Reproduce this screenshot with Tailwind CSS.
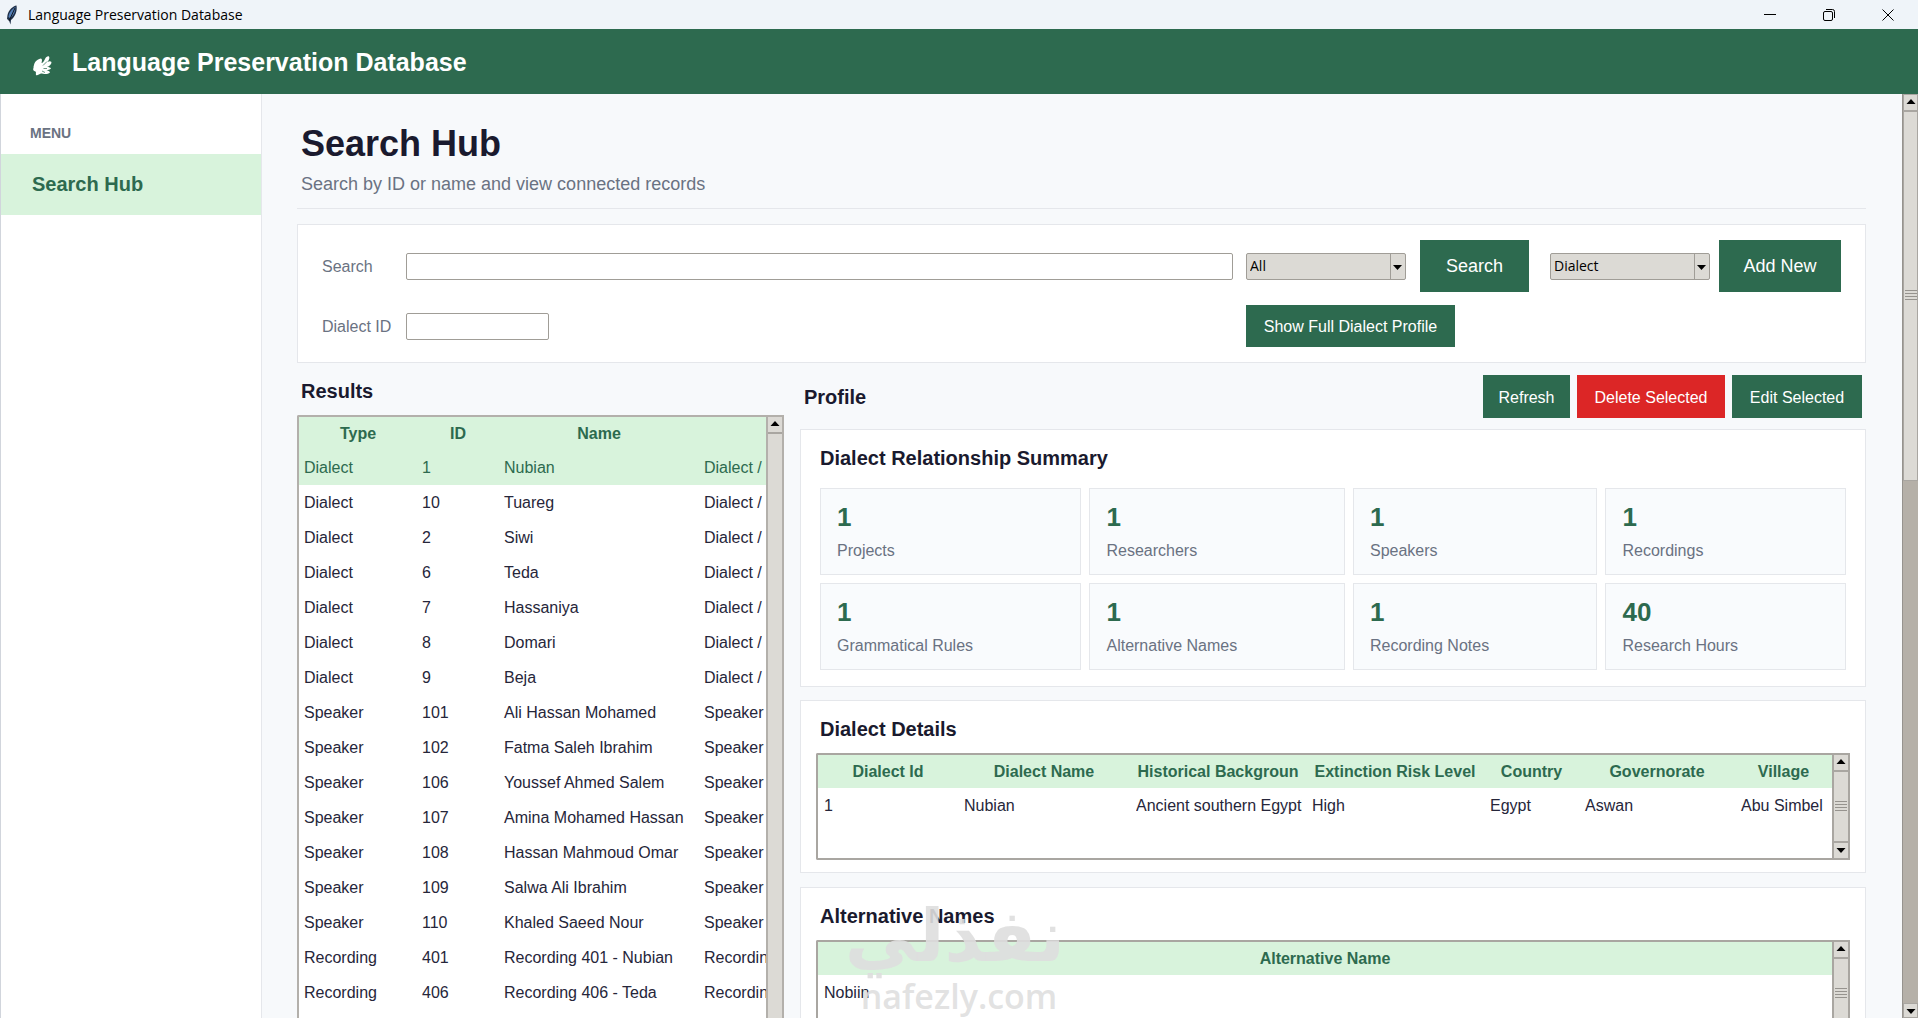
<!DOCTYPE html>
<html lang="en">
  <head>
    <meta charset="UTF-8">
    <title>Language Preservation Database</title>
    <script src="https://cdn.jsdelivr.net/npm/@tailwindcss/browser@4"></script>
  </head>
  <body class="h-screen flex flex-col overflow-hidden bg-[#f7f9fb] text-base leading-5 text-[#1a1a2e] font-['Liberation_Sans',Arial,sans-serif]">

    <!-- window title bar -->
    <div class="h-[29px] shrink-0 flex items-center bg-[#eff4f9] pl-1 pr-[6px] text-black">
      <svg class="w-4 h-5" viewBox="0 0 16 20">
        <path d="M12.5 0.5C9 1 4.500 5 3.500 10L3 14L5 15.500L6.500 19.500L7 15C11 12 13.500 6 12.500 0.500Z" fill="#1e2f48"/>
        <path d="M11.500 2C8 4 5 7 4.500 12L6 13C9 11 11.500 7 11.500 2Z" fill="#5580b8"/>
        <path d="M11 3L5 16" stroke="#10161f" fill="none"/>
      </svg>
      <span class="ml-2 text-sm font-['Open_Sans',sans-serif]">Language Preservation Database</span>
      <div class="ml-auto flex">
        <button class="w-12 h-[29px] grid place-items-center" aria-label="Minimize">
          <svg class="w-3 h-3" viewBox="0 0 12 12" stroke="#000" fill="none"><path d="M0 5.500H12"/></svg>
        </button>
        <button class="w-[70px] h-[29px] grid place-items-center" aria-label="Restore">
          <svg class="w-3 h-3" viewBox="0 0 12 12" stroke="#000" fill="none"><rect x=".5" y="2.500" width="9" height="9" rx="1.500"/><path d="M3 .5H9.500A2 2 0 0 1 11.500 2.500V9"/></svg>
        </button>
        <button class="w-12 h-[29px] grid place-items-center" aria-label="Close">
          <svg class="w-3 h-3" viewBox="0 0 12 12" stroke="#000" fill="none"><path d="M.5 .5L11.500 11.500M11.500 .5L.5 11.500"/></svg>
        </button>
      </div>
    </div>

    <header class="h-[65px] shrink-0 flex items-center bg-[#2d6a4f] pl-8 text-white">
      <svg class="w-5 h-5 mt-2" viewBox="0 0 20 20" fill="#fff">
        <path d="M2 9C3 5 6 3 9 2.500C10.500 3 10 5 9.500 7C11 7 12 5 13 3C14 1 15.500 0 17 .5C18 2 17 4 15.500 6C17 5 18.500 5 19.500 6C19.500 8.500 17.500 10 15 11C17 11 18.500 11.500 19 12.500C18 14 16 14 14.500 14C16 15 17.500 15 18 16.500C15 19 11 17.500 9 17.500C7 18 5.500 20 4 19C3.500 17.500 4.500 16.500 3.500 15.500C1.500 15 .5 13.500 1.500 12C1.500 11 1.500 10 2 9Z"/>
        <path d="M11 9.500L15 5.500M11.500 12.500H15M10 15L13 16.500" stroke="#2d6a4f" stroke-width=".7" fill="none"/>
      </svg>
      <div class="ml-5 text-[25px] leading-8 font-bold">Language Preservation Database</div>
    </header>

    <div class="flex-1 min-h-0 flex">
      <nav class="w-[262px] shrink-0 bg-white border-l border-r border-l-gray-300 border-r-gray-200">
        <div class="h-[60px] pt-[29px] pl-[29px] text-sm leading-5 font-bold text-gray-500">MENU</div>
        <a href="#" class="h-[61px] flex items-center pb-[2px] pl-[31px] bg-[#d8f3dc] text-xl leading-6 font-bold text-[#2d6a4f]">Search Hub</a>
      </nav>

      <main class="flex-1 min-w-0 flex flex-col pl-[35px] pr-9">
        <div class="h-[115px] shrink-0 border-b border-gray-200 pl-1 pt-[30px]">
          <h1 class="text-4xl leading-10 font-bold">Search Hub</h1>
          <p class="mt-2 text-lg leading-6 text-gray-500">Search by ID or name and view connected records</p>
        </div>

        <!-- search card -->
        <form class="mt-[15px] h-[139px] shrink-0 bg-white border border-gray-200 pl-6 pr-6 pt-[15px]">
          <div class="flex items-center h-[52px]">
            <label for="search" class="w-[84px] pt-[2px] text-gray-500">Search</label>
            <input id="search" type="text" class="flex-1 min-w-0 h-[27px] border border-[#a09d97] rounded-xs bg-white">
            <div class="relative ml-[13px]">
              <select aria-label="Search type" class="appearance-none block w-40 h-[27px] pl-[3px] border border-[#a09d97] rounded-xs bg-[#dcdad5] text-sm leading-5 text-black font-['Open_Sans',sans-serif]"><option>All</option></select>
              <svg class="absolute right-0 top-0 w-4 h-[27px] pointer-events-none" viewBox="0 0 16 27"><path d="M.5 1V26" stroke="#a09d97"/><path d="M3 12H12L7.500 17Z"/></svg>
            </div>
            <button type="button" class="ml-[14px] w-[109px] h-[52px] bg-[#2d6a4f] text-lg text-white">Search</button>
            <div class="relative ml-[21px]">
              <select aria-label="Record type" class="appearance-none block w-40 h-[27px] pl-[3px] border border-[#a09d97] rounded-xs bg-[#dcdad5] text-sm leading-5 text-black font-['Open_Sans',sans-serif]"><option>Dialect</option></select>
              <svg class="absolute right-0 top-0 w-4 h-[27px] pointer-events-none" viewBox="0 0 16 27"><path d="M.5 1V26" stroke="#a09d97"/><path d="M3 12H12L7.500 17Z"/></svg>
            </div>
            <button type="button" class="ml-[9px] w-[122px] h-[52px] bg-[#2d6a4f] text-lg text-white">Add New</button>
          </div>
          <div class="mt-[13px] flex items-center h-[42px]">
            <label for="dialectId" class="w-[84px] pt-[2px] text-gray-500">Dialect ID</label>
            <input id="dialectId" type="text" class="w-[143px] h-[27px] border border-[#a09d97] rounded-xs bg-white">
            <div class="ml-auto w-[595px]">
              <button type="button" class="w-[209px] h-[42px] pt-[2px] bg-[#2d6a4f] text-white">Show Full Dialect Profile</button>
            </div>
          </div>
        </form>

        <div class="flex-1 min-h-0 grid grid-cols-[487px_minmax(0,1fr)] gap-x-4">
          <section class="min-h-0 flex flex-col">
            <h2 class="pt-4 pl-1 h-[52px] text-xl leading-6 font-bold">Results</h2>
            <div class="flex-1 min-h-0 flex border-2 border-b-0 border-r-0 border-[#b3b0ab] rounded-tl-xs bg-white">
              <div class="flex-1 min-w-0 overflow-hidden">
                <table class="w-full table-fixed whitespace-nowrap">
                  <colgroup><col class="w-[118px]"><col class="w-[82px]"><col class="w-[200px]"><col></colgroup>
                  <thead class="bg-[#d8f3dc] text-[#2d6a4f]">
                    <tr class="h-[33px]"><th>Type</th><th>ID</th><th>Name</th><th></th></tr>
                  </thead>
                  <tbody id="results" class="text-[#26263a]"></tbody>
                </table>
              </div>
              <div class="w-[18px] flex flex-col border-x-2 border-[#b3b0ab] bg-[#dcdad5]">
                <svg class="w-[14px] h-[15px]" viewBox="0 0 14 15"><path d="M2.500 9H11.500L7 4Z"/></svg>
                <div class="flex-1 border-t-2 border-[#a9a6a1]"></div>
              </div>
            </div>
          </section>

          <section class="min-w-0 min-h-0">
            <div class="flex items-center gap-[7px] pt-3 pb-[11px] pl-1 pr-1 h-[66px]">
              <h2 class="mr-auto text-xl leading-6 font-bold">Profile</h2>
              <button type="button" class="w-[87px] h-[43px] pt-[2px] bg-[#2d6a4f] text-white">Refresh</button>
              <button type="button" class="w-[148px] h-[43px] pt-[2px] bg-[#dc2626] text-white">Delete Selected</button>
              <button type="button" class="w-[130px] h-[43px] pt-[2px] bg-[#2d6a4f] text-white">Edit Selected</button>
            </div>

            <div class="bg-white border border-gray-200 px-[19px] pt-4 h-[258px]">
              <h3 class="text-xl leading-6 font-bold">Dialect Relationship Summary</h3>
              <div id="stats" class="mt-[18px] grid grid-cols-[262fr_256fr_245fr_241fr] gap-2"></div>
            </div>

            <div class="mt-[13px] bg-white border border-gray-200 pl-[15px] pr-[15px] pt-4 h-[173px]">
              <h3 class="pl-1 text-xl leading-6 font-bold">Dialect Details</h3>
              <div class="mt-3 h-[107px] flex border-2 border-r-0 border-[#a9a6a1] rounded-l-xs">
                <div class="flex-1 min-w-0 overflow-hidden">
                  <table class="w-full table-fixed whitespace-nowrap">
                    <colgroup><col class="w-[140px]"><col class="w-[172px]"><col class="w-[176px]"><col class="w-[178px]"><col class="w-[95px]"><col class="w-[156px]"><col></colgroup>
                    <thead class="bg-[#d8f3dc] text-[#2d6a4f]">
                      <tr class="h-[33px]"><th>Dialect Id</th><th>Dialect Name</th><th>Historical Backgroun</th><th>Extinction Risk Level</th><th>Country</th><th>Governorate</th><th>Village</th></tr>
                    </thead>
                    <tbody class="text-[#26263a]">
                      <tr class="h-[35px]"><td class="pl-[6px]">1</td><td class="pl-[6px]">Nubian</td><td class="pl-[6px] pr-1"><div class="overflow-hidden">Ancient southern Egyptian</div></td><td class="pl-[6px]">High</td><td class="pl-[6px]">Egypt</td><td class="pl-[6px]">Aswan</td><td class="pl-[6px]">Abu Simbel</td></tr>
                    </tbody>
                  </table>
                </div>
                <div class="w-[18px] flex flex-col items-center border-x-2 border-[#a9a6a1] bg-[#dcdad5]">
                  <svg class="w-[14px] h-[15px]" viewBox="0 0 14 15"><path d="M2.500 9H11.500L7 4Z"/></svg>
                  <div class="flex-1 w-full border-y-2 border-[#a9a6a1] grid place-items-center">
                    <svg class="w-3 h-3" viewBox="0 0 12 12" stroke="#96938e"><path d="M0 .5H12M0 3.500H12M0 6.500H12M0 9.500H12"/></svg>
                  </div>
                  <svg class="w-[14px] h-[15px]" viewBox="0 0 14 15"><path d="M2.500 5H11.500L7 10Z"/></svg>
                </div>
              </div>
            </div>

            <div class="relative mt-[14px] bg-white border border-gray-200 pl-[15px] pr-[15px] pt-4 h-[173px]">
              <h3 class="pl-1 text-xl leading-6 font-bold">Alternative Names</h3>
              <div class="mt-3 h-[107px] flex border-2 border-r-0 border-[#a9a6a1] rounded-l-xs">
                <div class="flex-1 min-w-0 overflow-hidden">
                  <table class="w-full table-fixed whitespace-nowrap">
                    <thead class="bg-[#d8f3dc] text-[#2d6a4f]"><tr class="h-[33px]"><th>Alternative Name</th></tr></thead>
                    <tbody class="text-[#26263a]"><tr class="h-[35px]"><td class="pl-[6px]">Nobiin</td></tr></tbody>
                  </table>
                </div>
                <div class="w-[18px] flex flex-col items-center border-x-2 border-[#a9a6a1] bg-[#dcdad5]">
                  <svg class="w-[14px] h-[15px]" viewBox="0 0 14 15"><path d="M2.500 9H11.500L7 4Z"/></svg>
                  <div class="flex-1 w-full border-y-2 border-[#a9a6a1] grid place-items-center">
                    <svg class="w-3 h-3" viewBox="0 0 12 12" stroke="#96938e"><path d="M0 .5H12M0 3.500H12M0 6.500H12M0 9.500H12"/></svg>
                  </div>
                  <svg class="w-[14px] h-[15px]" viewBox="0 0 14 15"><path d="M2.500 5H11.500L7 10Z"/></svg>
                </div>
              </div>

              <!-- watermark -->
              <div class="absolute left-[52px] top-[10px] w-[212px] text-center text-[#dedede]/90 pointer-events-none">
                <div lang="ar" dir="rtl" class="h-[78px] text-[72px] leading-[76px] font-bold font-['DejaVu_Sans',sans-serif]">نفذلي</div>
                <div class="text-[34px] leading-10 font-semibold font-['Open_Sans',sans-serif]">nafezly.com</div>
              </div>
            </div>
          </section>
        </div>
      </main>

      <!-- page scrollbar -->
      <div class="w-4 shrink-0 flex flex-col items-center bg-[#b5b0a8] border-l border-[#96938e]">
        <div class="w-full h-[17px] bg-[#dcdad5] border border-[#a9a6a1]"><svg class="w-[14px] h-[15px]" viewBox="0 0 14 15"><path d="M2.500 9H11.500L7 4Z"/></svg></div>
        <div class="w-full h-[40%] bg-[#dcdad5] border border-[#a9a6a1] grid place-items-center">
          <svg class="w-3 h-3" viewBox="0 0 12 12" stroke="#96938e"><path d="M0 .5H12M0 3.500H12M0 6.500H12M0 9.500H12"/></svg>
        </div>
        <div class="mt-auto w-full h-[15px] bg-[#dcdad5] border border-[#a9a6a1]"><svg class="w-[14px] h-[15px]" viewBox="0 0 14 15"><path d="M2.500 5H11.500L7 10Z"/></svg></div>
      </div>
    </div>

    <script>
      const rows = [
        ['Dialect', 1, 'Nubian', 'Dialect /'],
        ['Dialect', 10, 'Tuareg', 'Dialect /'],
        ['Dialect', 2, 'Siwi', 'Dialect /'],
        ['Dialect', 6, 'Teda', 'Dialect /'],
        ['Dialect', 7, 'Hassaniya', 'Dialect /'],
        ['Dialect', 8, 'Domari', 'Dialect /'],
        ['Dialect', 9, 'Beja', 'Dialect /'],
        ['Speaker', 101, 'Ali Hassan Mohamed', 'Speaker'],
        ['Speaker', 102, 'Fatma Saleh Ibrahim', 'Speaker'],
        ['Speaker', 106, 'Youssef Ahmed Salem', 'Speaker'],
        ['Speaker', 107, 'Amina Mohamed Hassan', 'Speaker'],
        ['Speaker', 108, 'Hassan Mahmoud Omar', 'Speaker'],
        ['Speaker', 109, 'Salwa Ali Ibrahim', 'Speaker'],
        ['Speaker', 110, 'Khaled Saeed Nour', 'Speaker'],
        ['Recording', 401, 'Recording 401 - Nubian', 'Recordin'],
        ['Recording', 406, 'Recording 406 - Teda', 'Recordin'],
      ];
      document.getElementById('results').innerHTML = rows.map((row, i) =>
        `<tr class="${i === 0 ? 'h-[35px] bg-[#d8f3dc] text-[#2d6a4f]' : 'h-[35px]'}">` +
        row.map(cell => `<td class="pl-[5px] overflow-hidden">${cell}</td>`).join('') + '</tr>'
      ).join('');

      const stats = [
        [1, 'Projects'], [1, 'Researchers'], [1, 'Speakers'], [1, 'Recordings'],
        [1, 'Grammatical Rules'], [1, 'Alternative Names'], [1, 'Recording Notes'], [40, 'Research Hours'],
      ];
      document.getElementById('stats').innerHTML = stats.map(([value, label]) =>
        `<div class="h-[87px] border border-gray-200 bg-[#f9fbfd] pl-4 pt-3">
          <div class="text-[26px] leading-8 font-bold text-[#2d6a4f]">${value}</div>
          <div class="mt-2 text-gray-500">${label}</div>
        </div>`
      ).join('');
    </script>
  </body>
</html>
